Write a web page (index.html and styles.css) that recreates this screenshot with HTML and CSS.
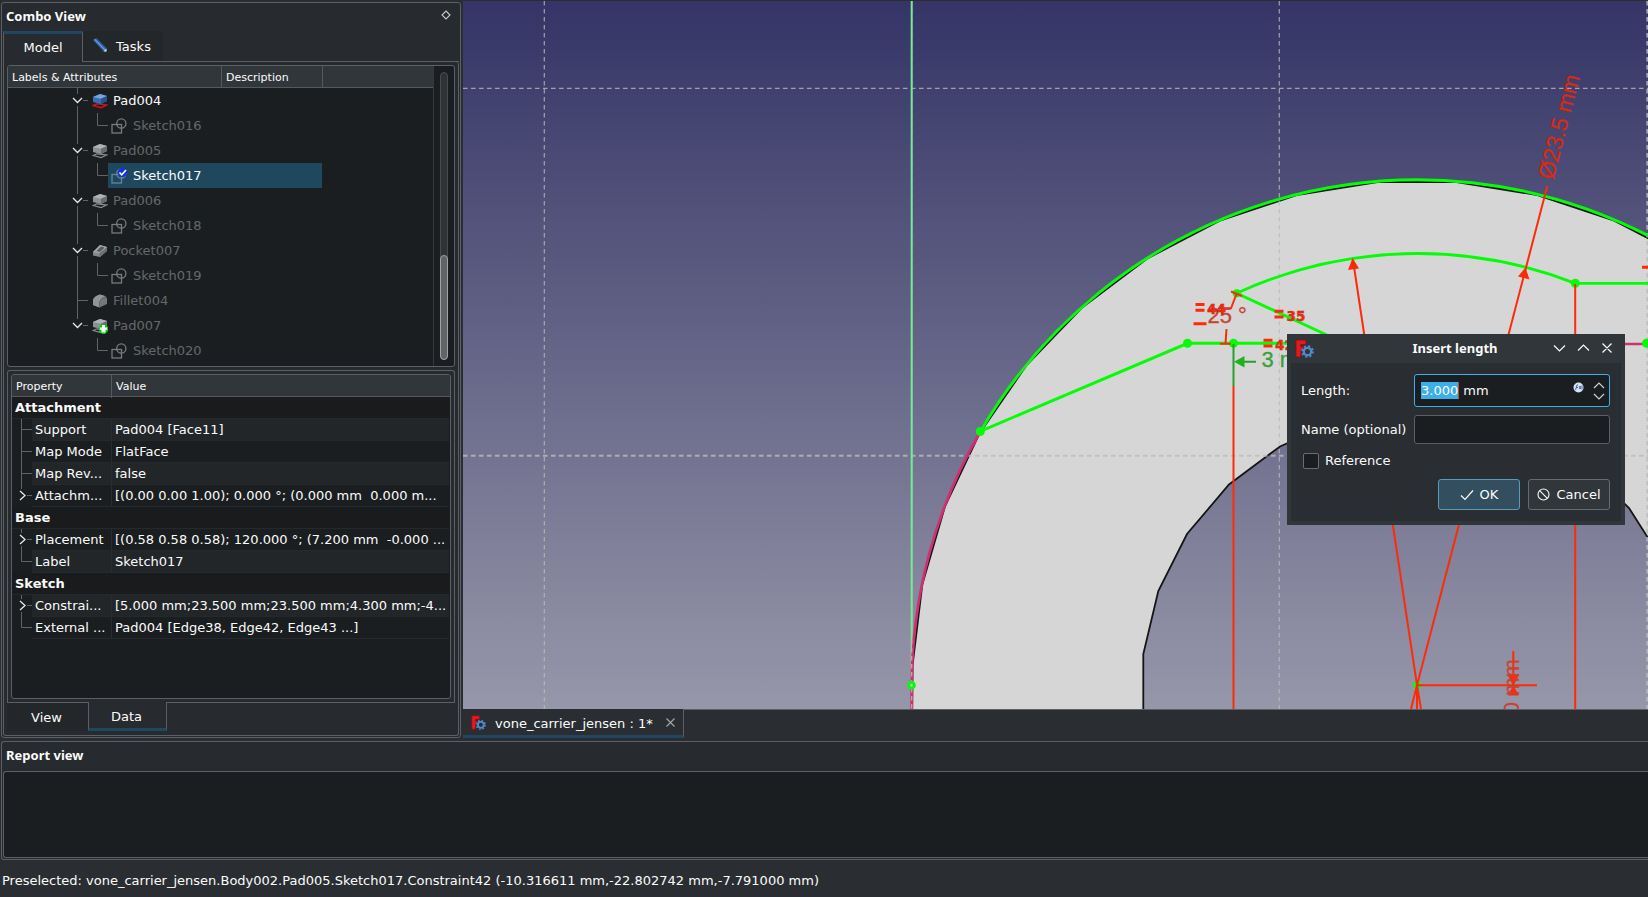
FILE: index.html
```html
<!DOCTYPE html>
<html lang="en">
<head>
<meta charset="utf-8">
<title>vone_carrier_jensen</title>
<link rel="stylesheet" href="styles.css">
</head>
<body>
<svg class="defs" width="0" height="0">
  <symbol id="b-open" viewBox="0 0 84 25"><path class="line" d="M69.5 0V6M69.5 18V25M75 12.5H80"/><path class="chev" d="M65 10l4.5 4.5L74 10"/></symbol>
  <symbol id="b-open-last" viewBox="0 0 84 25"><path class="line" d="M69.5 0V6M75 12.5H80"/><path class="chev" d="M65 10l4.5 4.5L74 10"/></symbol>
  <symbol id="b-leaf" viewBox="0 0 84 25"><path class="line" d="M69.5 0V25M69.5 12.5H80"/></symbol>
  <symbol id="b-child" viewBox="0 0 100 25"><path class="line" d="M69.5 0V25M89.5 0V12.5H100"/></symbol>
  <symbol id="b-child-last" viewBox="0 0 100 25"><path class="line" d="M89.5 0V12.5H100"/></symbol>
  <symbol id="i-pad" viewBox="0 0 16 16"><path d="M1.200 12.500L5 10.800 14.800 12 9 14.600z" fill="none" stroke="#8b8f92" stroke-width="1.200"/><path d="M1 4L8 1 15 3V8L9 11 1 9z" fill="#8d9194"/><path d="M1 4L8 1 15 3 9 5.800z" fill="#b0b4b6"/><path d="M9 5.800L15 3V8L9 11z" fill="#696d70"/></symbol>
  <symbol id="i-pad-on" viewBox="0 0 16 16"><path d="M1.200 12.500L5 10.800 14.800 12 9 14.600z" fill="none" stroke="#c4161c" stroke-width="1.500"/><path d="M1 4L8 1 15 3V8L9 11 1 9z" fill="#3a6cb0"/><path d="M1 4L8 1 15 3 9 5.800z" fill="#78a5d8"/><path d="M9 5.800L15 3V8L9 11z" fill="#29528a"/></symbol>
  <symbol id="i-sketch" viewBox="0 0 16 16"><g fill="none" stroke="#777b7e" stroke-width="1.300"><rect x="1" y="6.500" width="9.500" height="8.500"/><circle cx="10.300" cy="5.500" r="4.600"/></g></symbol>
  <symbol id="i-sketch-sel" viewBox="0 0 16 16"><g fill="none" stroke="#668596" stroke-width="1.300"><rect x="1" y="6.500" width="9.500" height="8.500"/><circle cx="10.300" cy="5.500" r="4.600"/></g><circle cx="11.500" cy="4.500" r="4.600" fill="#1230ee"/><path d="M8.500 4.500l2.200 2.300L15 2" fill="none" stroke="#fff" stroke-width="1.600"/></symbol>
  <symbol id="i-pocket" viewBox="0 0 16 16"><path d="M1 9L8 2l7 2v4l-7 6-7-1.500z" fill="#858889"/><path d="M7 10l8-6v4l-7 6z" fill="#6c6f71"/><path d="M1 9L8 2l7 2-8 6.500z" fill="#a0a3a4"/><path d="M5 8l4-4 3 .8L8 8.500z" fill="#5a5d5f" stroke="#444" stroke-width=".5"/></symbol>
  <symbol id="i-fillet" viewBox="0 0 16 16"><path d="M1 7Q2 3 8 1.500L13 3Q15 4 15 6v5l-7.500 3.500L1 12z" fill="#75787b"/><path d="M1 7Q2 3 8 1.500L13 3Q8.500 5 7.500 9v5.500L1 12z" fill="#929598"/><path d="M7.500 14V9Q9 5 14 4" fill="none" stroke="#55585b" stroke-width=".7"/></symbol>
  <symbol id="i-tip" viewBox="0 0 9 10"><path d="M3 0h3l3 3v4L6 10H3L0 7V3z" fill="#00c80a"/><path d="M3 1h3v2.500h2.200v2.300H6.500V8.500h-4V5.800H.8V3.500H3z" fill="#fff"/></symbol>
  <symbol id="i-app" viewBox="0 0 19 19"><path d="M1 1h10v4.500H5.800v2.300h3v3.400h-3V18H1z" fill="#e01b20" stroke="#8e0b10" stroke-width=".8"/><circle cx="12.500" cy="12.500" r="5.200" fill="none" stroke="#27466d" stroke-width="3" stroke-dasharray="2.300 1.780"/><circle cx="12.500" cy="12.500" r="3.700" fill="none" stroke="#5488c8" stroke-width="2.300"/><circle cx="12.500" cy="12.500" r="5.400" fill="none" stroke="#5488c8" stroke-width="1.800" stroke-dasharray="2 2.240"/></symbol>
  <symbol id="p-mid" viewBox="0 0 20 22"><path class="line" d="M9.500 0V22M9.500 10.500H20"/></symbol>
  <symbol id="p-end" viewBox="0 0 20 22"><path class="line" d="M9.500 0V10.500H20"/></symbol>
  <symbol id="p-exp" viewBox="0 0 20 22"><path class="line" d="M9.500 0V4M15 10.500H20"/><path class="chev" d="M8 6l5 4.500-5 4.500"/></symbol>
  <symbol id="p-exp-mid" viewBox="0 0 20 22"><path class="line" d="M9.500 0V4M9.500 17V22M15 10.500H20"/><path class="chev" d="M8 6l5 4.500-5 4.500"/></symbol>
</svg>

<div class="workspace">
  <aside class="dock">
    <div class="dock-title"><span>Combo View</span>
      <svg width="10" height="10" viewBox="0 0 10 10"><path d="M5 1l4 4-4 4-4-4z" fill="none" stroke="#c8c9ca" stroke-width="1.100"/></svg>
    </div>
    <div class="tabs">
      <div class="tab tab-active">Model</div>
      <div class="tab tab-tasks"><svg width="16" height="16" viewBox="0 0 16 16"><path d="M1 3l3.500-2L14.500 11v3.500h-3z" fill="#2f5c9e"/><path d="M2.500 2.200L13 13" stroke="#6b9ad8" stroke-width="1.300"/><path d="M14.500 11.500v3h-3z" fill="#dfe6ee"/></svg><span>Tasks</span></div>
      <div class="tab-rest"></div>
    </div>
    <div class="pane">
      <div class="tree">
        <div class="tree-main">
          <div class="tree-head"><span class="h1">Labels &amp; Attributes</span><span class="h2">Description</span></div>
          <div class="row on"><svg width="84" height="25"><use href="#b-open"/></svg><svg class="ico" width="16" height="16"><use href="#i-pad-on"/></svg><span>Pad004</span></div>
          <div class="row"><svg width="100" height="25"><use href="#b-child"/></svg><div class="item"><svg width="16" height="16"><use href="#i-sketch"/></svg><span>Sketch016</span></div></div>
          <div class="row"><svg width="84" height="25"><use href="#b-open"/></svg><svg class="ico" width="16" height="16"><use href="#i-pad"/></svg><span>Pad005</span></div>
          <div class="row"><svg width="100" height="25"><use href="#b-child"/></svg><div class="item selected"><svg width="16" height="16"><use href="#i-sketch-sel"/></svg><span>Sketch017</span></div></div>
          <div class="row"><svg width="84" height="25"><use href="#b-open"/></svg><svg class="ico" width="16" height="16"><use href="#i-pad"/></svg><span>Pad006</span></div>
          <div class="row"><svg width="100" height="25"><use href="#b-child"/></svg><div class="item"><svg width="16" height="16"><use href="#i-sketch"/></svg><span>Sketch018</span></div></div>
          <div class="row"><svg width="84" height="25"><use href="#b-open"/></svg><svg class="ico" width="16" height="16"><use href="#i-pocket"/></svg><span>Pocket007</span></div>
          <div class="row"><svg width="100" height="25"><use href="#b-child"/></svg><div class="item"><svg width="16" height="16"><use href="#i-sketch"/></svg><span>Sketch019</span></div></div>
          <div class="row"><svg width="84" height="25"><use href="#b-leaf"/></svg><svg class="ico" width="16" height="16"><use href="#i-fillet"/></svg><span>Fillet004</span></div>
          <div class="row"><svg width="84" height="25"><use href="#b-open-last"/></svg><svg class="ico" width="16" height="16"><use href="#i-pad"/><use href="#i-tip" x="7" y="6" width="9" height="10"/></svg><span>Pad007</span></div>
          <div class="row"><svg width="100" height="25"><use href="#b-child-last"/></svg><div class="item"><svg width="16" height="16"><use href="#i-sketch"/></svg><span>Sketch020</span></div></div>
        </div>
        <div class="scroll"><div class="track"><div class="thumb"></div></div></div>
      </div>
      <div class="props-pane">
        <div class="props">
          <div class="prop-head"><span>Property</span><span>Value</span></div>
          <div class="group">Attachment</div>
          <div class="prop alt"><svg width="20" height="22"><use href="#p-mid"/></svg><span class="k">Support</span><span class="v">Pad004 [Face11]</span></div>
          <div class="prop"><svg width="20" height="22"><use href="#p-mid"/></svg><span class="k">Map Mode</span><span class="v">FlatFace</span></div>
          <div class="prop alt"><svg width="20" height="22"><use href="#p-mid"/></svg><span class="k">Map Rev...</span><span class="v">false</span></div>
          <div class="prop"><svg width="20" height="22"><use href="#p-exp"/></svg><span class="k">Attachm...</span><span class="v">[(0.00 0.00 1.00); 0.000 °; (0.000 mm&nbsp; 0.000 m...</span></div>
          <div class="group">Base</div>
          <div class="prop"><svg width="20" height="22"><use href="#p-exp-mid"/></svg><span class="k">Placement</span><span class="v">[(0.58 0.58 0.58); 120.000 °; (7.200 mm&nbsp; -0.000 ...</span></div>
          <div class="prop alt"><svg width="20" height="22"><use href="#p-end"/></svg><span class="k">Label</span><span class="v">Sketch017</span></div>
          <div class="group">Sketch</div>
          <div class="prop alt"><svg width="20" height="22"><use href="#p-exp-mid"/></svg><span class="k">Constrai...</span><span class="v">[5.000 mm;23.500 mm;23.500 mm;4.300 mm;-4...</span></div>
          <div class="prop"><svg width="20" height="22"><use href="#p-end"/></svg><span class="k">External ...</span><span class="v">Pad004 [Edge38, Edge42, Edge43 ...]</span></div>
        </div>
      </div>
      <div class="btabs"><div class="btab">View</div><div class="btab btab-active">Data</div><div class="btab-rest"></div></div>
    </div>
  </aside>

  <main class="mdi">
    <svg class="view" width="1185" height="708" viewBox="463 1 1185 708">
      <defs><linearGradient id="sky" x1="0" y1="0" x2="0" y2="1"><stop offset="0" stop-color="#343466"/><stop offset="1" stop-color="#9797aa"/></linearGradient></defs>
      <rect x="463" y="1" width="1185" height="708" fill="url(#sky)"/>
      <path fill="#d6d6d6" fill-rule="evenodd" stroke="#151515" stroke-width="1.800" d="M912.200 720L912.600 665 922.300 584.600 945.100 506 979.800 432.900 1026.400 365.500 1082.500 307.200 1148 258.100 1219.800 220.600 1296.600 195.100 1377.400 182.100 1456.600 182.100 1537.400 195.100 1614.200 220.600 1686 258.100V720ZM1143.300 720V654L1158.300 591 1187 534 1229 484.500 1280 446.500 1340 420H1500L1605 484.500 1629 508 1650 541V720Z"/>
      <g fill="none" stroke="#bcbcbc" stroke-opacity=".8" stroke-width="1.200" stroke-dasharray="4.500 3.500"><path d="M463 88.300H1648M544.300 1V709M1279.300 1V709"/><path stroke-width="2" d="M463 455.800H1648M1647.300 1V709"/></g>
      <path d="M911.700 1V685" stroke="#6df58a" stroke-width="2"/>
      <path d="M911.700 1V709" stroke="#a5bfb2" stroke-opacity=".55" stroke-width="1.600" stroke-dasharray="4.500 3.500"/>
      <g fill="none" stroke="#d03070" stroke-width="2.700"><path d="M980.300 431.700A505.300 505.300 0 0 0 911.700 685.300V709"/><path d="M1600 344H1648"/></g>
      <path d="M911.700 640V709" stroke="#d6a3b8" stroke-width="1.200" stroke-dasharray="4.500 3.500"/>
      <g fill="none" stroke="#0f0" stroke-width="2.900">
        <path d="M980.300 431.700A505.300 505.300 0 0 1 1648 235.500"/>
        <path d="M980.300 431.300L1187.500 343.300H1600"/>
        <path d="M1330 336.500L1236.700 293.300A431.500 431.500 0 0 1 1575.300 283.400H1648"/>
      </g>
      <g fill="#0f0"><circle cx="980.300" cy="431.500" r="4.500"/><circle cx="1187.500" cy="343.300" r="4.500"/><circle cx="1233.500" cy="343.300" r="4.500"/><circle cx="1236.700" cy="293.300" r="4"/><circle cx="1575.300" cy="283.300" r="4.500"/><circle cx="1646.500" cy="343.300" r="4.500"/><circle cx="911.500" cy="685.300" r="4.300"/><circle cx="1417" cy="685.300" r="4.200"/></g>
      <circle cx="911.500" cy="685.300" r="1.400" fill="#a7e0a7"/>
      <g fill="none" stroke="#ff2a08" stroke-width="2">
        <path d="M1233.500 386V709M1575.200 284V709M1353 260L1417 685.300L1421 709M1547.300 186L1417 685.300L1411 709M1417 685.300V709M1417 685.300H1537M1513.300 651V695"/>
        <path d="M1231 291.500L1242 296M1236.500 294L1231 308.300H1219M1226.500 329L1225.500 343.500M1220 343.800H1231"/>
      </g>
      <g fill="#ff2a08"><path d="M1352.500 258l6.500 10.500-11 1.600zM1525.500 267.500l4 12-11.500-3zM1513.300 686l-5.500-10.500h11zM1513.300 685l-5.500 10.500h11z"/></g>
      <path d="M1233.500 344V386M1244 361.700H1256" stroke="#28a028" stroke-width="2"/>
      <path d="M1234 361.700L1244.500 356V367.400z" fill="#1cb41c"/>
      <text class="dim green" x="1261.500" y="366.500">3 mm</text>
      <text class="dim" x="1207.500" y="323">25 °</text>
      <text class="dim bright" transform="translate(1553 180.500) rotate(-75.400)">Ø23.5 mm</text>
      <text class="dim" transform="translate(1518.500 732.500) rotate(-90)">5.0 mm</text>
      <path stroke="#ff2a08" stroke-width="3" d="M1195.500 304.500H1204.500M1195.500 310.300H1204.500M1193.500 323.800H1206.500M1274.500 311.300H1283.500M1274.500 317H1283.500M1263.500 340.300H1272.500M1263.500 346H1272.500M1642 267.200H1648"/>
      <g class="tag"><text x="1207" y="313.500">44</text><text x="1286.500" y="320.500">35</text><text x="1275" y="349.500">42</text></g>
    </svg>

    <div class="dialog">
      <div class="dlg-title"><svg width="19" height="19"><use href="#i-app"/></svg><span>Insert length</span>
        <svg width="60" height="12" viewBox="0 0 60 12" fill="none" stroke="#fcfcfc" stroke-width="1.200"><path d="M1 3.500l5.500 5.500L12 3.500M25 8.500L30.500 3 36 8.500M49.500 1.500l9 9M58.500 1.500l-9 9"/></svg>
      </div>
      <div class="dlg-body">
        <label>Length:</label>
        <div class="field focus"><span class="seltext">3.000</span><span class="unit">mm</span>
          <svg class="fx" width="11" height="11" viewBox="0 0 11 11"><circle cx="5.500" cy="5.500" r="5" fill="#d5e3f5"/><path d="M2.500 8l1.500-5 1 0M3 5.500h2M6 4l2 3M8 4L6 7M9 3.500v4" stroke="#3a5e96" stroke-width=".9" fill="none"/></svg>
          <svg width="12" height="18" viewBox="0 0 12 18" fill="none" stroke="#d0d0d0" stroke-width="1.200"><path d="M1 6l5-5 5 5M1 12l5 5 5-5"/></svg>
        </div>
        <label>Name (optional)</label>
        <div class="field"></div>
        <div class="check"><i></i><span>Reference</span></div>
        <div class="buttons">
          <div class="btn primary"><svg width="14" height="12" viewBox="0 0 14 12"><path d="M1 6.500l4 4L13 1.500" fill="none" stroke="#fcfcfc" stroke-width="1.200"/></svg><span>OK</span></div>
          <div class="btn"><svg width="13" height="13" viewBox="0 0 13 13" fill="none" stroke="#fcfcfc" stroke-width="1.100"><circle cx="6.500" cy="6.500" r="5.500"/><path d="M2.700 2.700l7.600 7.600"/></svg><span>Cancel</span></div>
        </div>
      </div>
    </div>

    <div class="mdi-tabs">
      <div class="mdi-tab"><svg width="15" height="15" viewBox="0 0 19 19"><use href="#i-app"/></svg><span>vone_carrier_jensen : 1*</span><svg width="9" height="9" viewBox="0 0 9 9"><path d="M.5.5l8 8M8.500.5l-8 8" stroke="#a5a7a9" stroke-width="1.100"/></svg></div>
      <div class="mdi-rest"></div>
    </div>
  </main>
</div>

<section class="report"><div class="report-title">Report view</div><div class="report-box"></div></section>
<footer class="status">Preselected: vone_carrier_jensen.Body002.Pad005.Sketch017.Constraint42 (-10.316611 mm,-22.802742 mm,-7.791000 mm)</footer>
</body>
</html>
```
FILE: styles.css
```css
* { box-sizing: border-box; }
body {
  margin: 0;
  width: 1648px;
  height: 897px;
  overflow: hidden;
  display: flex;
  flex-direction: column;
  background: #2a2e32;
  color: #fcfcfc;
  font: 13px "DejaVu Sans", sans-serif;
  white-space: nowrap;
}
svg { display: block; flex: none; }
.defs { position: absolute; }
.line { fill: none; stroke: #616467; stroke-width: 1; }
.chev { fill: none; stroke: #e8e8e8; stroke-width: 1.3; }

.workspace { display: flex; height: 738px; flex: none; }

/* Combo View dock */
.dock {
  width: 460px;
  margin: 2px 2px 0 1px;
  height: 736px;
  flex: none;
  padding: 0 1px 1px;
  border: 1px solid #5c5f63;
  border-radius: 3px;
  background: #272a2e;
  display: flex;
  flex-direction: column;
}
.dock-title {
  height: 28px;
  padding: 0 8px 2px 3px;
  display: flex;
  align-items: center;
  justify-content: space-between;
  font: bold 13px "Noto Sans", sans-serif;
}
.dock-title svg { margin-top: -2px; }
.tabs { display: flex; height: 31px; flex: none; }
.tab { width: 80px; display: flex; align-items: center; justify-content: center; }
.tab-active { border: 1px solid #5c5f63; border-top: 3px solid #1f485e; border-bottom: 0; padding-bottom: 2px; }
.tab-tasks { gap: 8px; padding-right: 3px; background: #24272a; border-bottom: 1px solid #5c5f63; }
.tab-tasks svg { margin-top: -3px; }
.tab-rest { flex: 1; border-bottom: 1px solid #5c5f63; }
.pane {
  flex: 1;
  border: 1px solid #5c5f63;
  border-top: 0;
  border-radius: 0 3px 3px 3px;
  padding: 3px 3px 0;
  display: flex;
  flex-direction: column;
}
.tree {
  height: 302px;
  border: 1px solid #5c5f63;
  border-radius: 3px;
  background: #1b1e20;
  display: flex;
  overflow: hidden;
}
.tree-main { width: 426px; border-right: 1px solid #34383b; }
.tree-head {
  height: 22px;
  background: #31363b;
  border-bottom: 1px solid #55585c;
  display: flex;
  font-size: 11px;
}
.tree-head span { line-height: 23px; padding-left: 4px; border-right: 1px solid #55585c; }
.h1 { width: 214px; }
.h2 { width: 101px; }
.row { height: 25px; display: flex; align-items: center; color: #65686a; }
.row.on { color: #fcfcfc; }
.row .ico + span { margin-left: 5px; }
.item { width: 214px; height: 25px; padding-left: 3px; gap: 6px; display: flex; align-items: center; }
.item.selected { background: #1f485e; color: #fcfcfc; }
.scroll { flex: 1; padding: 6px 0 6px 6px; }
.track { width: 8px; height: 288px; border-radius: 4px; border: 1px solid #484b4e; background: #303336; display: flex; align-items: flex-end; }
.thumb { width: 8px; height: 105px; margin: 0 -1px -1px; flex: none; border-radius: 4px; border: 1px solid #a0a2a4; background: #616466; }

.props-pane {
  height: 333px;
  margin-top: 3px;
  padding: 3px;
  border: 1px solid #5c5f63;
  border-bottom: 0;
  border-radius: 3px 3px 0 0;
}
.props { height: 325px; border: 1px solid #5c5f63; border-radius: 3px; background: #1b1e20; overflow: hidden; }
.prop-head { height: 22px; display: grid; grid-template-columns: 100px 1fr; background: #31363b; border-bottom: 1px solid #55585c; font-size: 11px; line-height: 23px; }
.prop-head span { padding-left: 4px; }
.prop-head span:first-child { border-right: 1px solid #55585c; }
.group { height: 22px; line-height: 22px; padding-left: 3px; margin-right: 1px; background: #1a1b1c; border-bottom: 1px solid #26292b; font-weight: bold; }
.prop { height: 22px; display: grid; grid-template-columns: 20px 80px 1fr; line-height: 21px; margin-right: 1px; }
.k, .v { padding-left: 3px; border-bottom: 1px solid #26292b; overflow: hidden; }
.k { border-right: 1px solid #2a2d30; }
.alt .k, .alt .v { background: #232629; }
.btabs { display: flex; height: 30px; margin-top: -1px; }
.btab { width: 81px; height: 29px; line-height: 29px; padding-right: 2px; text-align: center; background: #24272a; border-top: 1px solid #5c5f63; }
.btab-active { width: 79px; background: #272a2e; border: 1px solid #5c5f63; border-top: 0; border-bottom: 3px solid #1f485e; }
.btab-rest { flex: 1; border-top: 1px solid #5c5f63; }

/* 3D view */
.mdi { position: relative; flex: 1; padding-top: 1px; }
.dim { font: 22px "Liberation Sans", sans-serif; fill: #c8432f; stroke: #c8432f; stroke-width: .3; }
.dim.green { fill: #38a038; stroke: #38a038; }
.dim.bright { font-size: 23px; fill: #e02a12; stroke: #b02818; }
.tag { font: bold 13.5px "DejaVu Sans", sans-serif; fill: #ff2a08; stroke: #a02a18; stroke-width: .4; }
.mdi-tabs { display: flex; height: 29px; }
.mdi-tab {
  width: 221px;
  border-right: 1px solid #5c5f63;
  border-bottom: 3px solid #1f485e;
  padding: 1px 0 0 8px;
  display: flex;
  align-items: center;
}
.mdi-tab span { width: 165px; margin: 1px 6px 0 9px; }
.mdi-rest { flex: 1; border-top: 1px solid #5c5f63; }

/* Insert length dialog */
.dialog {
  position: absolute;
  left: 824px;
  top: 334px;
  width: 338px;
  height: 191px;
  background: #31363b;
  padding: 0 4px 4px;
}
.dlg-title { height: 29px; padding: 0 8px 1px 4px; display: flex; align-items: center; justify-content: space-between; font: bold 13px "Noto Sans", sans-serif; }
.dlg-title span { margin-left: 43px; }
.dlg-body {
  height: 158px;
  background: #2a2e32;
  padding: 11px 11px 0 10px;
  display: grid;
  grid-template-columns: 113px 196px;
  grid-template-rows: 33px 29px 17px 33px;
  row-gap: 8px;
  align-items: center;
}
.field { height: 29px; border: 1px solid #5c5f63; border-radius: 3px; background: #1b1e20; }
.focus { height: 33px; border-color: #3daee9; display: flex; align-items: center; padding: 0 4px 0 6px; }
.seltext { background: #3daee9; line-height: 17px; border-right: 1px solid #c05020; }
.unit { margin-left: 4px; flex: 1; }
.fx { margin: -6px 9px 0 0; }
.check { grid-column: 1 / 3; display: flex; align-items: center; gap: 6px; padding-left: 2px; }
.check i { width: 16px; height: 16px; border: 1px solid #6b6e71; border-radius: 2px; background: #1b1e20; }
.buttons { grid-column: 1 / 3; display: flex; justify-content: flex-end; gap: 8px; align-self: end; }
.btn { width: 82px; height: 31px; border: 1px solid #686b6e; border-radius: 3px; background: #31363b; display: flex; align-items: center; justify-content: center; gap: 6px; }
.primary { background: #334e5e; border-color: #5a9aba; }

/* Report view */
.report { height: 119px; margin: 3px 0 0 1px; flex: none; padding: 0 0 1px 1px; border: 1px solid #5c5f63; border-right: 0; border-radius: 3px 0 0 3px; background: #272a2e; }
.report-title { height: 29px; padding-left: 3px; font: bold 13px/27px "Noto Sans", sans-serif; }
.report-box { height: 87px; border: 1px solid #5c5f63; border-right: 0; border-radius: 3px 0 0 3px; background: #1b1e20; }
.status { flex: 1; padding-left: 2px; line-height: 41px; }
```
